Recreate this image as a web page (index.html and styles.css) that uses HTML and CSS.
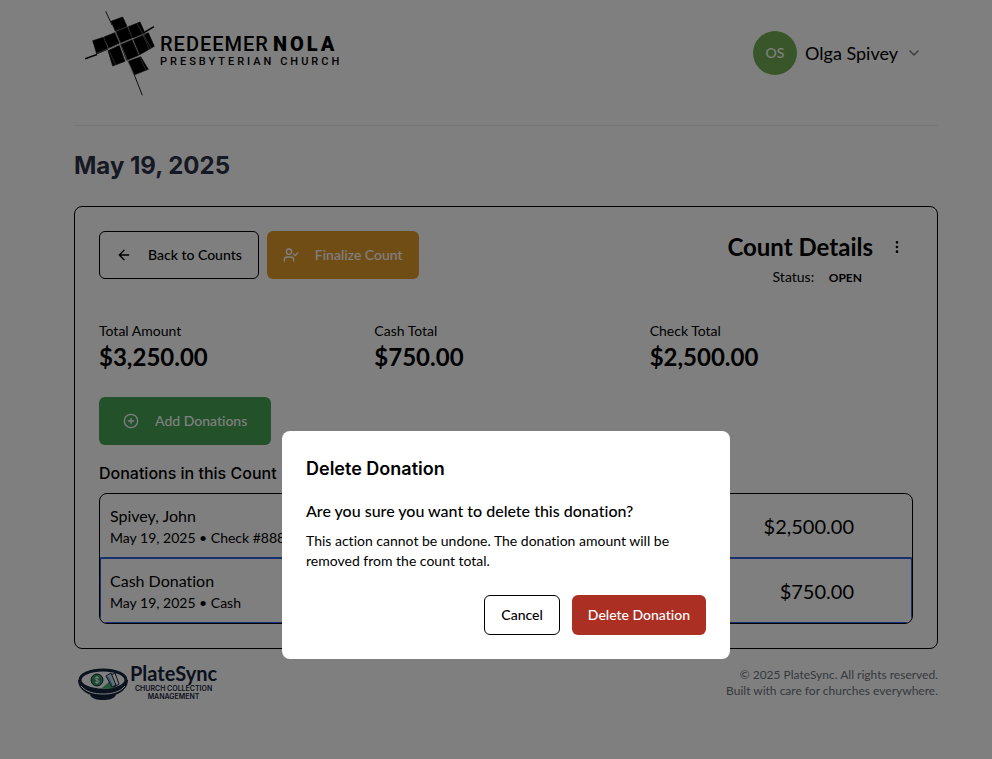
FILE: index.html
```html
<!DOCTYPE html>
<html lang="en">
<head>
  <meta charset="utf-8">
  <meta name="viewport" content="width=device-width, initial-scale=1">
  <title>PlateSync - Count Details</title>
  <link rel="stylesheet" href="styles.css">
</head>
<body>
  <div class="page">
    <header class="site-header">
      <a class="church-logo" href="#">
        <svg class="church-mark" width="74" height="88" viewBox="0 0 74 88" aria-hidden="true">
          <g fill="#000" stroke="#000" stroke-width="0.600">
            <path d="M26 11.300 37.700 7 42 16.300 30.300 21Z"/>
            <path d="M7.700 30.700 18.300 27.300 23 39.300 11.700 44Z"/>
            <path d="M19 27 29.700 22.700 34.300 33 23.700 38Z"/>
            <path d="M31 21.700 42.300 17 47 28 35.700 32.700Z"/>
            <path d="M43.300 16.700 55 12 60 23 47.700 28Z"/>
            <path d="M23 40.700 34.300 35.500 40 51.300 27.700 56Z"/>
            <path d="M35.700 34.700 47 29.700 53.700 45.300 41.700 50.300Z"/>
            <path d="M48.300 29.300 63.300 22.700 69.300 36.300 54.700 44.700Z"/>
            <path d="M43.300 51.300 55.700 46.700 63.300 59.300 49.700 64.700Z"/>
          </g>
          <g stroke="#888" stroke-width="0.600" fill="none">
            <path d="M52 13.500 66 38"/>
            <path d="M58 25 64.500 40"/>
            <path d="M24.500 41.500 30.500 55"/>
            <path d="M55 47.500 61 60.500"/>
            <path d="M12 43 60 24.500"/>
          </g>
          <path d="M20.700 1.300 27 15M47 59 57.300 85.300" stroke="#222" stroke-width="1" fill="none"/>
          <path d="M30 21 48 63" stroke="#888" stroke-width="0.700" fill="none"/>
          <path d="M0 48.700 12 44.500M60 22 69 16.700" stroke="#000" stroke-width="1.500" fill="none"/>
        </svg>
        <span class="church-name">
          <span class="church-line">REDEEMER<strong>NOLA</strong></span>
          <span class="church-sub">PRESBYTERIAN CHURCH</span>
        </span>
      </a>
      <button class="user-menu" type="button">
        <span class="avatar">OS</span>
        <span>Olga Spivey</span>
        <svg class="chevron" width="16" height="16" viewBox="0 0 24 24" aria-hidden="true"><path d="m6 9 6 6 6-6"/></svg>
      </button>
    </header>

    <main>
      <h1 class="page-title">May 19, 2025</h1>
      <section class="card">
        <div class="card-top">
          <div class="actions">
            <button class="btn btn-outline" type="button">
              <svg width="16" height="16" viewBox="0 0 24 24" aria-hidden="true"><path d="m12 19-7-7 7-7M19 12H5"/></svg>
              Back to Counts
            </button>
            <button class="btn btn-amber" type="button">
              <svg width="16" height="16" viewBox="0 0 24 24" aria-hidden="true"><path d="M16 21v-2a4 4 0 0 0-4-4H6a4 4 0 0 0-4 4v2"/><circle cx="9" cy="7" r="4"/><path d="m16 11 2 2 4-4"/></svg>
              Finalize Count
            </button>
          </div>
          <div class="summary">
            <div class="summary-text">
              <h2 class="summary-title">Count Details</h2>
              <p class="status">Status: <span class="badge">OPEN</span></p>
            </div>
            <button class="menu-btn" type="button" aria-label="More">
              <svg width="16" height="16" viewBox="0 0 24 24" aria-hidden="true"><circle cx="12" cy="12" r="1"/><circle cx="12" cy="5" r="1"/><circle cx="12" cy="19" r="1"/></svg>
            </button>
          </div>
        </div>

        <dl class="totals">
          <div><dt>Total Amount</dt><dd>$3,250.00</dd></div>
          <div><dt>Cash Total</dt><dd>$750.00</dd></div>
          <div><dt>Check Total</dt><dd>$2,500.00</dd></div>
        </dl>

        <button class="btn btn-green" type="button">
          <svg width="16" height="16" viewBox="0 0 24 24" aria-hidden="true"><circle cx="12" cy="12" r="10"/><path d="M8 12h8M12 8v8"/></svg>
          Add Donations
        </button>

        <h3 class="list-title">Donations in this Count</h3>
        <ul class="donations">
          <li>
            <button class="donation" type="button">
              <span class="donor"><span class="donor-name">Spivey, John</span><span class="donor-meta">May 19, 2025 • Check #888</span></span>
              <span class="amount">$2,500.00</span>
            </button>
          </li>
          <li>
            <button class="donation selected" type="button">
              <span class="donor"><span class="donor-name">Cash Donation</span><span class="donor-meta">May 19, 2025 • Cash</span></span>
              <span class="amount">$750.00</span>
            </button>
          </li>
        </ul>
      </section>
    </main>

    <footer class="site-footer">
      <a class="plate-logo" href="#">
        <svg width="50" height="34" viewBox="0 0 50 34" aria-hidden="true">
          <path d="M12 27h26c-2 4-7 5-13 5s-11-1-13-5Z" fill="#15243a"/>
          <path d="M0 12c0 10 11 17 25 17s25-7 25-17Z" fill="#15243a"/>
          <path d="M3 18c5 6 13 8 22 8s17-2 22-8" fill="none" stroke="#fff" stroke-width="1"/>
          <ellipse cx="25" cy="12" rx="23" ry="10" fill="#fff" stroke="#15243a" stroke-width="3"/>
          <path d="m24 20 8-7 4 7c-4 1-8 1-12 0Z" fill="#48ad70"/>
          <path d="m33 7 4-2 4 11-5 3Z" fill="#fff" stroke="#15243a" stroke-width="1"/>
          <path d="m28 8 5-3 5 12-4 2Z" fill="#c4dff0" stroke="#15243a" stroke-width="1"/>
          <path d="m30 9 4 8" stroke="#3c7fb0" stroke-width="1"/>
          <circle cx="19" cy="12" r="6" fill="#2f955c" stroke="#15243a" stroke-width="1"/>
          <path d="M21 10c-1-1-4-1-4 .500S21 12 21 13.500s-3 1.500-4 .500M19 8v8" fill="none" stroke="#fff" stroke-width="1"/>
        </svg>
        <span class="plate-name">
          <span class="plate-title">PlateSync</span>
          <span class="plate-sub">CHURCH COLLECTION<br>MANAGEMENT</span>
        </span>
      </a>
      <p class="legal">© 2025 PlateSync. All rights reserved.<br>Built with care for churches everywhere.</p>
    </footer>
  </div>

  <div class="overlay">
    <div class="dialog" role="alertdialog" aria-modal="true" aria-labelledby="dialog-title" aria-describedby="dialog-text">
      <h2 class="dialog-title" id="dialog-title">Delete Donation</h2>
      <p class="dialog-question">Are you sure you want to delete this donation?</p>
      <p class="dialog-text" id="dialog-text">This action cannot be undone. The donation amount will be removed from the count total.</p>
      <div class="dialog-actions">
        <button class="btn btn-small btn-outline" type="button">Cancel</button>
        <button class="btn btn-small btn-red" type="button">Delete Donation</button>
      </div>
    </div>
  </div>
</body>
</html>
```
FILE: styles.css
```css
* {
  box-sizing: border-box;
}

body,
h1,
h2,
h3,
p,
ul,
dl,
dd {
  margin: 0;
}

body {
  background: #fff;
  color: #000;
  font-family: Lato, "Liberation Sans", sans-serif;
  font-size: 14px;
  font-variant-ligatures: none;
  line-height: 20px;
  padding-left: 20px;
}

button {
  font: inherit;
  font-variant-ligatures: none;
  color: inherit;
  background: none;
  border: 0;
  padding: 0;
  cursor: pointer;
}

a {
  color: inherit;
  text-decoration: none;
}

svg {
  display: block;
  flex: none;
}

.page {
  max-width: 864px;
  margin: 0 auto;
}

/* Header */
.site-header {
  display: flex;
  justify-content: space-between;
  align-items: flex-start;
  height: 126px;
  padding: 10px 16px 0 11px;
  border-bottom: 1px solid #ececee;
}

.church-logo {
  display: flex;
  gap: 1px;
}

.church-name {
  display: flex;
  flex-direction: column;
  padding-top: 23px;
  font-family: Roboto, sans-serif;
}

.church-line {
  font-size: 20px;
  font-weight: 500;
  line-height: 22px;
  letter-spacing: 1px;
}

.church-line strong {
  font-weight: 900;
  letter-spacing: 3px;
  margin-left: 4px;
}

.church-sub {
  font-size: 11px;
  font-weight: 500;
  line-height: 14px;
  letter-spacing: 3px;
}

.user-menu {
  display: flex;
  align-items: center;
  gap: 8px;
  margin-top: 21px;
  font-size: 18px;
}

.avatar {
  display: grid;
  place-items: center;
  width: 44px;
  height: 44px;
  border-radius: 50%;
  background: #73ad55;
  color: #fff;
  font-size: 14px;
  font-weight: 500;
}

.chevron,
.btn svg,
.menu-btn svg {
  fill: none;
  stroke: currentColor;
  stroke-width: 2;
  stroke-linecap: round;
  stroke-linejoin: round;
}

.chevron {
  color: #6b7280;
}

.page-title {
  margin: 24px 0;
  color: #2d3148;
  font-family: Inter, sans-serif;
  font-size: 24px;
  font-weight: 700;
  line-height: 32px;
}

/* Count card */
.card {
  padding: 24px;
  border: 1px solid #000;
  border-radius: 8px;
}

.card-top {
  display: flex;
  justify-content: space-between;
  align-items: flex-start;
}

.actions {
  display: flex;
  gap: 8px;
}

.btn {
  display: flex;
  align-items: center;
  justify-content: center;
  gap: 16px;
  height: 48px;
  padding: 0 16px;
  border-radius: 6px;
  font-weight: 500;
  white-space: nowrap;
}

.btn-small {
  height: 40px;
}

.btn-outline {
  border: 1px solid #000;
}

.btn-amber {
  background: #e39a2d;
  color: #fff;
}

.btn-green {
  padding: 0 24px;
  background: #44a254;
  color: #fff;
}

.btn-red {
  background: #ab3023;
  color: #fff;
}

.summary {
  display: flex;
  gap: 8px;
}

.summary-text {
  text-align: right;
}

.summary-title {
  font-size: 24px;
  font-weight: 700;
  line-height: 32px;
}

.status {
  margin-top: 2px;
  line-height: 24px;
}

.badge {
  padding: 0 11px;
  font-size: 12px;
  font-weight: 700;
}

.menu-btn {
  display: grid;
  place-items: center;
  width: 32px;
  height: 32px;
}

.totals {
  display: grid;
  grid-template-columns: repeat(3, 1fr);
  gap: 12px;
  margin: 31px 0 24px;
}

.totals dd {
  font-size: 24px;
  font-weight: 700;
  line-height: 32px;
}

.list-title {
  margin: 16px 0 8px;
  font-family: Inter, sans-serif;
  font-size: 16px;
  font-weight: 500;
  line-height: 24px;
}

.donations {
  padding: 0;
  list-style: none;
  border: 1px solid #000;
  border-radius: 8px;
  overflow: hidden;
}

.donation {
  display: flex;
  justify-content: space-between;
  align-items: center;
  width: 100%;
  padding: 10px 58px 10px 10px;
  text-align: left;
}

.donation.selected {
  border-top: 1px solid transparent;
  border-radius: 2px;
  outline: 2px solid #2f60e0;
  outline-offset: -1px;
}

.donor {
  display: flex;
  flex-direction: column;
}

.donor-name {
  font-size: 16px;
  line-height: 24px;
}

.amount {
  font-size: 20px;
  line-height: 28px;
}

/* Footer */
.site-footer {
  display: flex;
  justify-content: space-between;
  align-items: flex-start;
  padding: 12px 0 56px 4px;
}

.plate-logo {
  display: flex;
  gap: 2px;
  color: #15243a;
}

.plate-logo svg {
  margin-top: 7px;
}

.plate-name {
  display: flex;
  flex-direction: column;
  align-items: center;
}

.plate-title {
  font-size: 20px;
  font-weight: 700;
  line-height: 24px;
}

.plate-sub {
  font-family: Inter, sans-serif;
  font-size: 7px;
  font-weight: 600;
  line-height: 8px;
  text-align: center;
}

.legal {
  margin-top: 6px;
  color: #6b7280;
  font-size: 12px;
  line-height: 16px;
  text-align: right;
}

/* Confirmation dialog */
.overlay {
  position: fixed;
  inset: 0;
  display: flex;
  justify-content: center;
  align-items: flex-end;
  padding: 0 0 100px 20px;
  background: rgba(0, 0, 0, 0.5);
}

.dialog {
  width: 100%;
  max-width: 448px;
  padding: 24px;
  border-radius: 8px;
  background: #fff;
}

.dialog-title {
  font-family: Inter, sans-serif;
  font-size: 18px;
  font-weight: 600;
  line-height: 28px;
}

.dialog-question {
  margin: 16px 0 8px;
  font-size: 16px;
  font-weight: 500;
  line-height: 24px;
}

.dialog-actions {
  display: flex;
  justify-content: flex-end;
  gap: 12px;
  margin-top: 24px;
}
```
